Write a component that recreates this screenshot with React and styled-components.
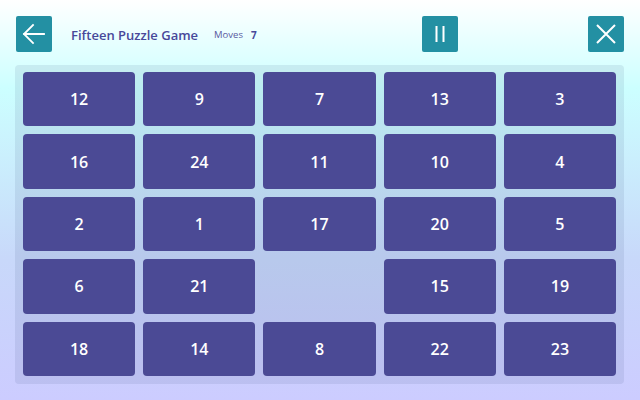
import React from "react";
import styled, { createGlobalStyle } from "styled-components";

const GlobalStyle = createGlobalStyle`
  html, body { margin: 0; padding: 0; }
  body {
    width: 640px;
    height: 400px;
    overflow: hidden;
    font-family: "Open Sans", "Noto Sans", sans-serif;
  }
`;

const Screen = styled.div`
  width: 640px;
  height: 400px;
  box-sizing: border-box;
  padding: 16px 16px 16px 15px;
  display: flex;
  flex-direction: column;
  gap: 13px;
  background: linear-gradient(180deg, #ffffff 0%, #ccffff 22%, #c8d8fa 65%, #ccccff 100%);
`;

const TopBar = styled.header`
  display: flex;
  align-items: center;
  height: 36px;
  padding-left: 1px;
`;

const IconButton = styled.button`
  width: 36px;
  height: 36px;
  flex: none;
  padding: 0;
  border: none;
  border-radius: 2px;
  background: #2390a3;
  display: flex;
  align-items: center;
  justify-content: center;
  cursor: pointer;
`;

const Title = styled.h1`
  margin: 1px 0 0 19px;
  font-size: 13px;
  font-weight: 600;
  color: #48489a;
`;

const MovesLabel = styled.span`
  margin: 1px 0 0 16px;
  font-size: 9.5px;
  color: #5a5aa0;
`;

const MovesValue = styled.span`
  margin: 1px 0 0 8px;
  font-size: 10px;
  font-weight: 700;
  color: #48489a;
`;

const Spacer = styled.div`
  flex: ${(p) => (p.$width ? "none" : "1")};
  width: ${(p) => (p.$width ? `${p.$width}px` : "auto")};
`;

const Board = styled.main`
  flex: 1;
  box-sizing: border-box;
  padding: 7px 8px 8px;
  border-radius: 4px;
  background: rgba(50, 70, 120, 0.1);
  display: grid;
  grid-template-columns: repeat(5, 1fr);
  grid-template-rows: repeat(5, 1fr);
  gap: 8px;
`;

const Tile = styled.div`
  border-radius: 4px;
  background: ${(p) => (p.$empty ? "transparent" : "#4b4a95")};
  color: #ffffff;
  font-size: 16px;
  font-weight: 600;
  display: flex;
  align-items: center;
  justify-content: center;
`;

const tiles = [
  12, 9, 7, 13, 3,
  16, 24, 11, 10, 4,
  2, 1, 17, 20, 5,
  6, 21, null, 15, 19,
  18, 14, 8, 22, 23,
];

const BackIcon = () => (
  <svg width="24" height="24" viewBox="0 0 24 24" fill="none" stroke="#fff" strokeWidth="1.8" strokeLinecap="square">
    <path d="M2 12H22M11 3L2 12L11 21" />
  </svg>
);

const PauseIcon = () => (
  <svg width="24" height="24" viewBox="0 0 24 24" fill="#fff">
    <rect x="7.5" y="4" width="2" height="16" />
    <rect x="14.5" y="4" width="2" height="16" />
  </svg>
);

const CloseIcon = () => (
  <svg width="24" height="24" viewBox="0 0 24 24" fill="none" stroke="#fff" strokeWidth="2">
    <path d="M3 3L21 21M21 3L3 21" />
  </svg>
);

export default function App() {
  return (
    <>
      <GlobalStyle />
      <Screen>
        <TopBar>
          <IconButton aria-label="Back">
            <BackIcon />
          </IconButton>
          <Title>Fifteen Puzzle Game</Title>
          <MovesLabel>Moves</MovesLabel>
          <MovesValue>7</MovesValue>
          <Spacer />
          <IconButton aria-label="Pause">
            <PauseIcon />
          </IconButton>
          <Spacer $width={130} />
          <IconButton aria-label="Close">
            <CloseIcon />
          </IconButton>
        </TopBar>
        <Board>
          {tiles.map((n, i) => (
            <Tile key={i} $empty={n === null}>
              {n}
            </Tile>
          ))}
        </Board>
      </Screen>
    </>
  );
}
